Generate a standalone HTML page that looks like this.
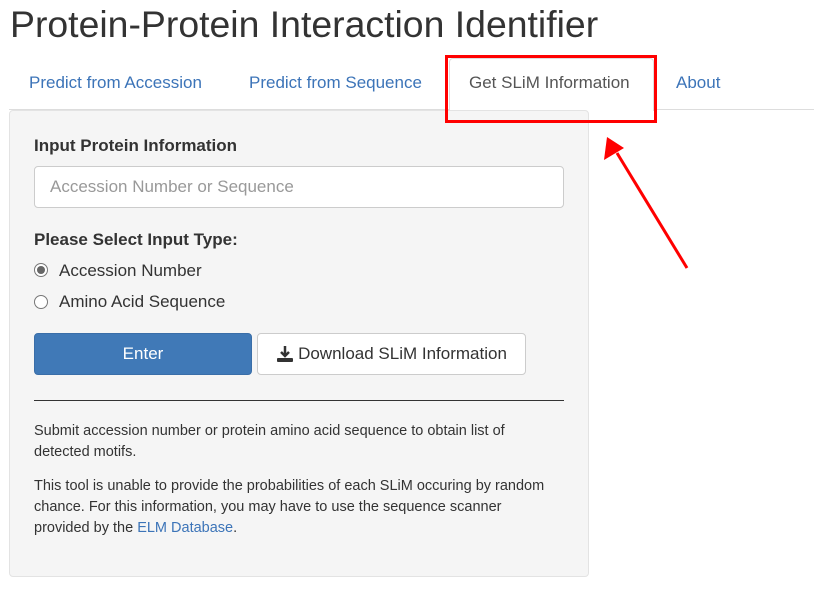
<!DOCTYPE html>
<html><head><meta charset="utf-8"><style>
*{box-sizing:border-box}
body{margin:0;width:814px;height:597px;background:#fff;font-family:"Liberation Sans",sans-serif;color:#333;position:relative;overflow:hidden}
.abs{position:absolute}
h1{position:absolute;left:10px;top:3px;margin:0;font-weight:normal;font-size:37.4px;color:#333;white-space:nowrap}
.navline{left:9px;top:109px;width:805px;height:1px;background:#ddd}
.tab{top:73px;font-size:17px;color:#3c74b8;white-space:nowrap}
.active{left:449px;top:58px;width:205px;height:53px;background:#fff;border:1px solid #ddd;border-bottom:none;border-radius:4px 4px 0 0}
.panel{left:9px;top:110px;width:580px;height:467px;background:#f5f5f5;border:1px solid #e3e3e3;border-radius:4px}
.lbl{font-weight:bold;font-size:17px;color:#333;white-space:nowrap}
.input{left:34px;top:166px;width:530px;height:42px;background:#fff;border:1px solid #ccc;border-radius:4px;font-size:17px;color:#999;padding:10px 15px}
.radio{width:14px;height:14px;border:1px solid #777;border-radius:50%;background:#fff}
.rt{font-size:17px;white-space:nowrap}
.btn{height:42px;border-radius:4px;font-size:17px;display:flex;align-items:center;justify-content:center}
.small{font-size:14.5px;line-height:21px;color:#333;left:34px;width:520px}
</style></head><body>
<h1>Protein-Protein Interaction Identifier</h1>
<div class="abs navline"></div>
<div class="abs active"></div>
<div class="abs tab" style="left:29px">Predict from Accession</div>
<div class="abs tab" style="left:249px">Predict from Sequence</div>
<div class="abs tab" style="left:469px;color:#555">Get SLiM Information</div>
<div class="abs tab" style="left:676px">About</div>
<div class="abs panel"></div>
<div class="abs" style="left:445px;top:55px;width:212px;height:68px;border:3px solid #f00"></div>
<svg class="abs" style="left:0;top:0" width="814" height="597"><line x1="687" y1="268" x2="617" y2="153" stroke="#f00" stroke-width="3"/><polygon points="607,137 604,160 624,148" fill="#f00"/></svg>
<div class="abs lbl" style="left:34px;top:136px">Input Protein Information</div>
<div class="abs input">Accession Number or Sequence</div>
<div class="abs lbl" style="left:34px;top:230px">Please Select Input Type:</div>
<div class="abs radio" style="left:34px;top:263px"><div style="width:8px;height:8px;border-radius:50%;background:#666;margin:2px"></div></div>
<div class="abs rt" style="left:59px;top:261px">Accession Number</div>
<div class="abs radio" style="left:34px;top:295px"></div>
<div class="abs rt" style="left:59px;top:292px">Amino Acid Sequence</div>
<div class="abs btn" style="left:34px;top:333px;width:218px;background:#4079b7;border:1px solid #3a6ea8;color:#fff">Enter</div>
<div class="abs btn" style="left:257px;top:333px;width:269px;background:#fff;border:1px solid #ccc;color:#333"><svg width="18" height="18" viewBox="0 0 18 18" style="margin-right:4px"><path d="M9 1v10M5 7l4 4 4-4" stroke="#333" stroke-width="2.5" fill="none"/><rect x="1" y="13" width="16" height="4" rx="1" fill="#333"/></svg>Download SLiM Information</div>
<div class="abs" style="left:34px;top:400px;width:530px;height:1px;background:#333"></div>
<div class="abs small" style="top:421px">Submit accession number or protein amino acid sequence to obtain list of detected motifs.</div>
<div class="abs small" style="top:476px">This tool is unable to provide the probabilities of each SLiM occuring by random chance. For this information, you may have to use the sequence scanner provided by the <span style="color:#3c74b8">ELM Database</span>.</div>
</body></html>
